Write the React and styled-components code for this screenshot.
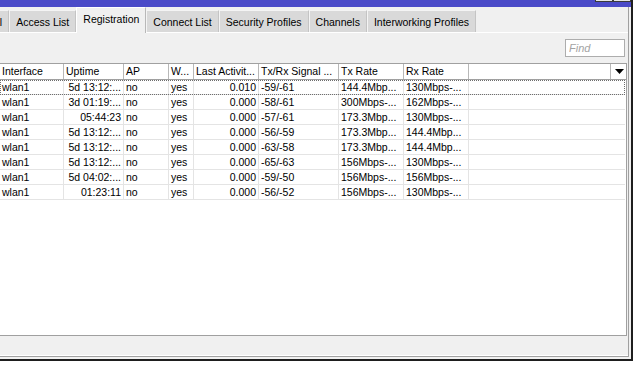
import React from 'react';
import styled, { createGlobalStyle } from 'styled-components';

const GlobalStyle = createGlobalStyle`
  * { box-sizing: border-box; }
  html, body { margin: 0; padding: 0; background: #ffffff; }
  body {
    font-family: "Liberation Sans", Arial, sans-serif;
    font-size: 10.5px;
    color: #000;
    overflow: hidden;
  }
`;

const columns = [
  { key: 'iface', title: 'Interface', width: 64 },
  { key: 'uptime', title: 'Uptime', width: 60, align: 'right' },
  { key: 'ap', title: 'AP', width: 45 },
  { key: 'wds', title: 'W...', width: 25 },
  { key: 'last', title: 'Last Activit...', width: 65, align: 'right' },
  { key: 'signal', title: 'Tx/Rx Signal ...', width: 80 },
  { key: 'tx', title: 'Tx Rate', width: 65 },
  { key: 'rx', title: 'Rx Rate', width: 65 },
];

const rows = [
  ['wlan1', '5d 13:12:...', 'no', 'yes', '0.010', '-59/-61', '144.4Mbp...', '130Mbps-...'],
  ['wlan1', '3d 01:19:...', 'no', 'yes', '0.000', '-58/-61', '300Mbps-...', '162Mbps-...'],
  ['wlan1', '05:44:23', 'no', 'yes', '0.000', '-57/-61', '173.3Mbp...', '130Mbps-...'],
  ['wlan1', '5d 13:12:...', 'no', 'yes', '0.000', '-56/-59', '173.3Mbp...', '144.4Mbp...'],
  ['wlan1', '5d 13:12:...', 'no', 'yes', '0.000', '-63/-58', '173.3Mbp...', '144.4Mbp...'],
  ['wlan1', '5d 13:12:...', 'no', 'yes', '0.000', '-65/-63', '156Mbps-...', '130Mbps-...'],
  ['wlan1', '5d 04:02:...', 'no', 'yes', '0.000', '-59/-50', '156Mbps-...', '156Mbps-...'],
  ['wlan1', '01:23:11', 'no', 'yes', '0.000', '-56/-52', '156Mbps-...', '130Mbps-...'],
];

// first tab is scrolled mostly out of view, only its last letter shows
const tabs = ['Nstreme Dual', 'Access List', 'Registration', 'Connect List', 'Security Profiles', 'Channels', 'Interworking Profiles'];

const App = () => {
  return (
    <Screen>
      <GlobalStyle />
      <Window>
        <TitleBar>
          <CtlButton />
          <CtlButton />
        </TitleBar>
        <Frame>
          <TabStrip>
            {tabs.map((t, i) => (
              <Tab key={t} $active={t === 'Registration'} $clipped={i === 0}>
                {t}
              </Tab>
            ))}
          </TabStrip>
          <Toolbar>
            <FindInput placeholder="Find" readOnly />
          </Toolbar>
          <Table>
            <HeaderRow>
              {columns.map((c) => (
                <HeaderCell key={c.key} $width={c.width}>
                  {c.title}
                </HeaderCell>
              ))}
              <HeaderFiller />
              <MenuCell>
                <svg width="9" height="5" viewBox="0 0 9 5">
                  <polygon points="0,0 9,0 4.5,5" fill="#000" />
                </svg>
              </MenuCell>
            </HeaderRow>
            {rows.map((r, i) => (
              <Row key={i} $focused={i === 0}>
                {r.map((v, j) => (
                  <Cell key={j} $width={columns[j].width} $align={columns[j].align}>
                    {v}
                  </Cell>
                ))}
              </Row>
            ))}
          </Table>
          <StatusBar />
        </Frame>
      </Window>
    </Screen>
  );
};

const Screen = styled.div`
  width: 635px;
  height: 373px;
  background: #ffffff;
  overflow: hidden;
`;

const Window = styled.div`
  width: 633px;
  height: 361px;
  display: flex;
  flex-direction: column;
  background: #f0f0f0;
  border-right: 2px solid #1e1e1e;
  border-bottom: 2px solid #1e1e1e;
  overflow: hidden;
`;

const TitleBar = styled.div`
  height: 7px;
  flex: none;
  background: #4a4ac8;
  display: flex;
  justify-content: flex-end;
  align-items: flex-start;
`;

const CtlButton = styled.div`
  width: 18px;
  height: 2px;
  background: #e6e6e6;
  border: 1px solid #3a3a3a;
  border-top: none;
`;

const Frame = styled.div`
  flex: 1;
  display: flex;
  flex-direction: column;
  margin: 0 2px 2px 0;
  border-right: 1px solid #a0a0a0;
  border-bottom: 1px solid #a0a0a0;
`;

const TabStrip = styled.div`
  height: 26px;
  flex: none;
  display: flex;
  align-items: flex-end;
  border-bottom: 1px solid #ffffff;
`;

const Tab = styled.div`
  position: relative;
  height: ${(p) => (p.$active ? '26px' : '22px')};
  margin-bottom: ${(p) => (p.$active ? '-1px' : '0')};
  margin-left: ${(p) => (p.$clipped ? '-69px' : '0')};
  padding: 0 6px ${(p) => (p.$active ? '3px' : '0')};
  display: flex;
  align-items: center;
  white-space: nowrap;
  font-size: 10.5px;
  background: ${(p) => (p.$active ? '#f0f0f0' : '#d9d9d9')};
  border-top: 1px solid ${(p) => (p.$active ? '#ffffff' : '#f4f4f4')};
  border-left: 1px solid ${(p) => (p.$active ? '#ffffff' : '#f4f4f4')};
  border-right: 1px solid ${(p) => (p.$active ? '#b8b8b8' : '#c4c4c4')};
  z-index: ${(p) => (p.$active ? 1 : 0)};
`;

const Toolbar = styled.div`
  height: 30px;
  flex: none;
  display: flex;
  justify-content: flex-end;
  align-items: flex-start;
  padding: 6px 3px 0 0;
`;

const FindInput = styled.input`
  width: 60px;
  height: 18px;
  margin: 0;
  padding: 0 3px;
  border: 1px solid #adadad;
  background: #ffffff;
  font-family: "Liberation Sans", Arial, sans-serif;
  font-size: 11px;
  font-style: italic;
  outline: none;

  &::placeholder {
    color: #a3a3a3;
  }
`;

const Table = styled.div`
  flex: 1;
  display: flex;
  flex-direction: column;
  margin-right: 1px;
  background: #ffffff;
  border-top: 1px solid #a0a0a0;
  border-right: 1px solid #a0a0a0;
  border-bottom: 1px solid #a0a0a0;
`;

const HeaderRow = styled.div`
  display: flex;
  height: 16px;
  flex: none;
  border-bottom: 1px solid #a0a0a0;
`;

const HeaderCell = styled.div`
  width: ${(p) => p.$width}px;
  flex: none;
  padding: 0 2px;
  line-height: 15px;
  white-space: nowrap;
  overflow: hidden;
  border-right: 1px solid #b8b8b8;
`;

const HeaderFiller = styled.div`
  flex: 1;
  border-right: 1px solid #b8b8b8;
`;

const MenuCell = styled.div`
  width: 15px;
  flex: none;
  display: flex;
  align-items: center;
  justify-content: center;
  padding-left: 1px;
`;

const Row = styled.div`
  display: flex;
  height: 15px;
  flex: none;
  border-bottom: 1px solid #e4e4e4;
  outline: ${(p) => (p.$focused ? '1px dotted #6e6e6e' : 'none')};
  outline-offset: -1px;
  margin-right: 1px;
`;

const Cell = styled.div`
  width: ${(p) => p.$width}px;
  flex: none;
  padding: 0 2px;
  line-height: 14px;
  white-space: nowrap;
  overflow: hidden;
  text-align: ${(p) => p.$align || 'left'};
  border-right: 1px solid #e4e4e4;
`;

const StatusBar = styled.div`
  height: 20px;
  flex: none;
  background: #f0f0f0;
  border-bottom: 1px solid #ffffff;
`;

export default App;
